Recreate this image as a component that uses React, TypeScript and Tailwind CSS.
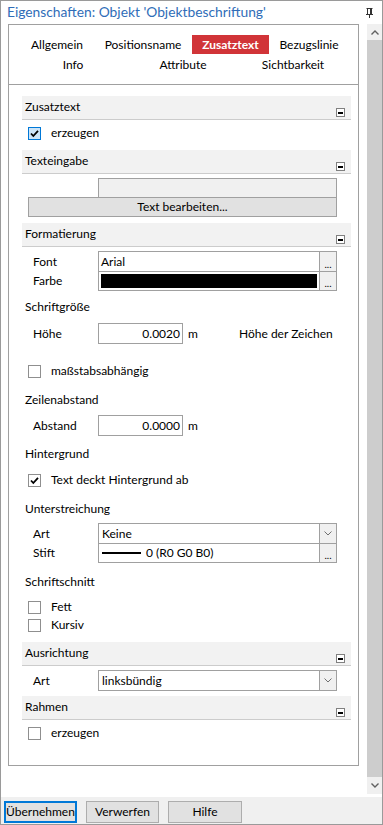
import React from "react";

const Minus = () => (
  <span className="self-end mb-[2px] w-[9px] h-[9px] border border-[#808080] bg-white flex items-center justify-center">
    <span className="w-[5px] h-[2px] bg-black" />
  </span>
);

const Header = ({ title, className }: { title: string; className: string }) => (
  <div
    className={`${className} h-[24px] bg-[#f2f2f2] border-b border-[#cccccc] flex justify-between pl-[3px] pr-[6px]`}
  >
    <span className="pt-[3px] leading-[16px]">{title}</span>
    <Minus />
  </div>
);

const Label = ({ text, className }: { text: string; className: string }) => (
  <div className={`${className} h-[16px] leading-[16px] pl-[3px]`}>{text}</div>
);

const Check = ({ checked, focus }: { checked?: boolean; focus?: boolean }) => (
  <span
    className={`w-[13px] h-[13px] border flex items-center justify-center ${
      focus ? "border-[#0078d7] bg-[#cce4f7]" : "border-[#8f8f8f] bg-white"
    }`}
  >
    {checked && (
      <svg width="11" height="11" viewBox="0 0 11 11">
        <path d="M2 5.5 L4.3 8 L9 2.8" fill="none" stroke="#000" strokeWidth="1.8" />
      </svg>
    )}
  </span>
);

const CheckRow = ({
  text,
  checked,
  focus,
  className,
}: {
  text: string;
  checked?: boolean;
  focus?: boolean;
  className: string;
}) => (
  <div className={`${className} flex items-center pl-[6px]`}>
    <Check checked={checked} focus={focus} />
    <span className="ml-[10px]">{text}</span>
  </div>
);

const Dots = () => (
  <span className="w-[17px] border-l border-[#a0a0a0] bg-[#f0f0f0] flex items-end justify-center pb-[2px] text-[10px] leading-[10px]">
    ...
  </span>
);

const Chevron = () => (
  <span className="w-[17px] border-l border-[#a0a0a0] bg-[#f0f0f0] flex items-center justify-center">
    <svg width="8" height="5" viewBox="0 0 8 5">
      <path d="M0.5 0.5 L4 4 L7.5 0.5" fill="none" stroke="#707070" strokeWidth="1" />
    </svg>
  </span>
);

const RowLabel = ({ text }: { text: string }) => <span className="w-[76px] pl-[11px]">{text}</span>;

const Pin = () => (
  <svg width="7" height="10" viewBox="0 0 7 10">
    <path d="M0.5 0.5 H6.5 M1.5 0.5 V6.5 M4.5 0.5 V6.5 M5.5 0.5 V6.5 M0 6.5 H7 M3.5 6.5 V10" fill="none" stroke="#333" strokeWidth="1" />
  </svg>
);

export default function App() {
  return (
    <div className="w-[383px] h-[825px] border border-[#9a9a9a] bg-white flex flex-col text-[12px] text-black font-['Lato',sans-serif] overflow-hidden">
      <div className="h-[23px] flex items-center justify-between pl-[6px] pr-[9px]">
        <span className="text-[13.8px] text-[#2f6db8]">Eigenschaften: Objekt 'Objektbeschriftung'</span>
        <Pin />
      </div>

      <div className="h-[773px] flex pl-[7px]">
        <div className="w-[351px] h-[742px] border border-[#a0a0a0] flex flex-col">
          <div className="h-[60px] border-b border-[#a0a0a0] flex flex-col">
            <div className="mt-[10px] h-[19px] flex items-center pl-[5px]">
              <span className="w-[86px] text-center">Allgemein</span>
              <span className="w-[86px] text-center">Positionsname</span>
              <span className="ml-[6px] w-[77px] h-[19px] flex items-center justify-center bg-[#d13438] text-white font-bold">
                Zusatztext
              </span>
              <span className="w-[80px] text-center">Bezugslinie</span>
            </div>
            <div className="mt-[1px] h-[19px] flex items-center pl-[9px]">
              <span className="w-[110px] text-center">Info</span>
              <span className="w-[110px] text-center">Attribute</span>
              <span className="w-[110px] text-center">Sichtbarkeit</span>
            </div>
          </div>

          <div className="ml-[13px] w-[329px] flex flex-col">
            <Header title="Zusatztext" className="mt-[11px]" />
            <CheckRow text="erzeugen" checked focus className="mt-[3px] h-[20px]" />

            <Header title="Texteingabe" className="mt-[7px]" />
            <div className="mt-[4px] ml-[76px] w-[239px] h-[20px] border border-[#a0a0a0] bg-[#f0f0f0]" />
            <div className="-mt-px ml-[6px] w-[309px] h-[20px] border border-[#a0a0a0] bg-[#e1e1e1] flex items-center justify-center">
              Text bearbeiten...
            </div>

            <Header title="Formatierung" className="mt-[6px]" />
            <div className="mt-[4px] h-[21px] flex items-center">
              <RowLabel text="Font" />
              <div className="w-[239px] h-[21px] border border-[#a0a0a0] flex">
                <span className="flex-1 bg-white pl-[2px] flex items-center">Arial</span>
                <Dots />
              </div>
            </div>
            <div className="-mt-px h-[20px] flex items-center">
              <RowLabel text="Farbe" />
              <div className="w-[239px] h-[20px] border border-[#a0a0a0] flex">
                <span className="flex-1 bg-white p-[2px] flex">
                  <span className="flex-1 bg-black" />
                </span>
                <Dots />
              </div>
            </div>

            <Label text="Schriftgröße" className="mt-[8px]" />
            <div className="mt-[8px] h-[21px] flex items-center">
              <RowLabel text="Höhe" />
              <span className="w-[85px] h-[21px] border border-[#a0a0a0] flex items-center justify-end pr-[2px]">
                0.0020
              </span>
              <span className="ml-[5px] w-[51px]">m</span>
              <span>Höhe der Zeichen</span>
            </div>

            <CheckRow text="maßstabsabhängig" className="mt-[17px] h-[20px]" />

            <Label text="Zeilenabstand" className="mt-[11px]" />
            <div className="mt-[7px] h-[21px] flex items-center">
              <RowLabel text="Abstand" />
              <span className="w-[85px] h-[21px] border border-[#a0a0a0] flex items-center justify-end pr-[2px]">
                0.0000
              </span>
              <span className="ml-[5px]">m</span>
            </div>

            <Label text="Hintergrund" className="mt-[10px]" />
            <CheckRow text="Text deckt Hintergrund ab" checked className="mt-[8px] h-[20px]" />

            <Label text="Unterstreichung" className="mt-[11px]" />
            <div className="mt-[6px] h-[21px] flex items-center">
              <RowLabel text="Art" />
              <div className="w-[239px] h-[21px] border border-[#a0a0a0] flex">
                <span className="flex-1 bg-white pl-[3px] flex items-center">Keine</span>
                <Chevron />
              </div>
            </div>
            <div className="-mt-px h-[20px] flex items-center">
              <RowLabel text="Stift" />
              <div className="w-[239px] h-[20px] border border-[#a0a0a0] flex">
                <span className="flex-1 bg-white pl-[3px] flex items-center">
                  <span className="w-[39px] h-[2px] bg-black" />
                  <span className="ml-[5px]">0 (R0 G0 B0)</span>
                </span>
                <Dots />
              </div>
            </div>

            <Label text="Schriftschnitt" className="mt-[11px]" />
            <CheckRow text="Fett" className="mt-[8px] h-[18px]" />
            <CheckRow text="Kursiv" className="h-[18px]" />

            <Header title="Ausrichtung" className="mt-[8px]" />
            <div className="mt-[4px] h-[21px] flex items-center">
              <RowLabel text="Art" />
              <div className="w-[239px] h-[21px] border border-[#a0a0a0] flex">
                <span className="flex-1 bg-white pl-[3px] flex items-center">linksbündig</span>
                <Chevron />
              </div>
            </div>

            <Header title="Rahmen" className="mt-[5px]" />
            <CheckRow text="erzeugen" className="mt-[3px] h-[20px]" />
          </div>
        </div>

        <div className="ml-[8px] w-[15px] h-[770px] flex flex-col">
          <div className="h-[16px] bg-[#f0f0f0] flex items-center justify-center">
            <svg width="8" height="5" viewBox="0 0 8 5">
              <path d="M0.5 4.5 L4 1 L7.5 4.5" fill="none" stroke="#606060" strokeWidth="1.4" />
            </svg>
          </div>
          <div className="flex-1 bg-[#cdcdcd]" />
          <div className="h-[17px] bg-[#f0f0f0] flex items-center justify-center">
            <svg width="8" height="5" viewBox="0 0 8 5">
              <path d="M0.5 0.5 L4 4 L7.5 0.5" fill="none" stroke="#606060" strokeWidth="1.4" />
            </svg>
          </div>
        </div>
      </div>

      <div className="flex-1 bg-[#f0f0f0] flex items-start pt-[4px] pl-[3px] gap-[9px]">
        <button className="w-[73px] h-[22px] border-2 border-[#0078d7] bg-[#e1e1e1] flex items-center justify-center">
          Übernehmen
        </button>
        <button className="w-[73px] h-[22px] border border-[#adadad] bg-[#e1e1e1] flex items-center justify-center">
          Verwerfen
        </button>
        <button className="w-[74px] h-[22px] border border-[#adadad] bg-[#e1e1e1] flex items-center justify-center">
          Hilfe
        </button>
      </div>
    </div>
  );
}
